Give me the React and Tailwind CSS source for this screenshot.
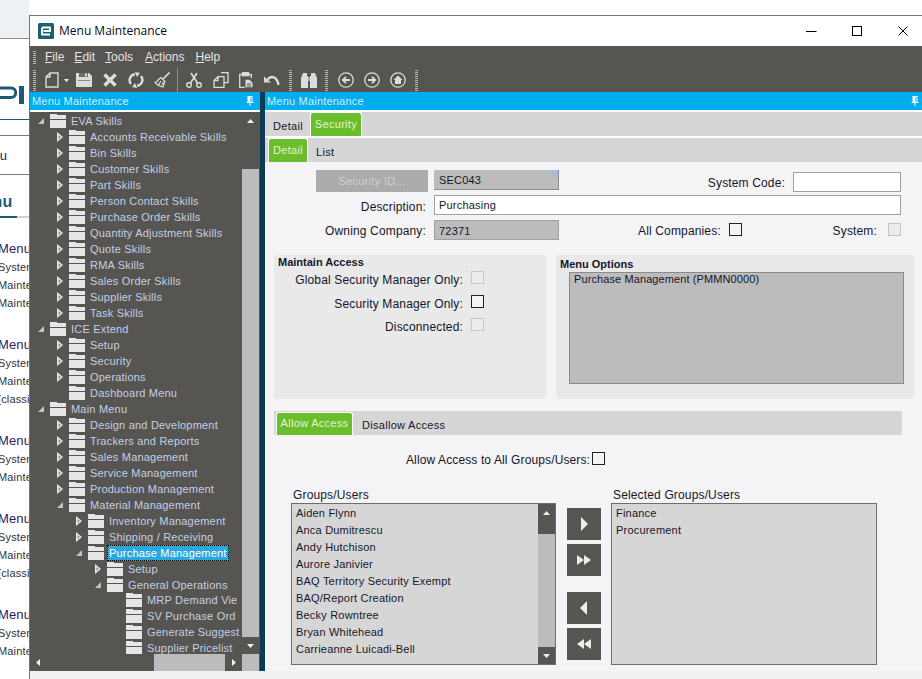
import React from 'react';

const tree = [
  { t: 'EVA Skills', l: 0, a: 'open' },
  { t: 'Accounts Receivable Skills', l: 1, a: 'closed' },
  { t: 'Bin Skills', l: 1, a: 'closed' },
  { t: 'Customer Skills', l: 1, a: 'closed' },
  { t: 'Part Skills', l: 1, a: 'closed' },
  { t: 'Person Contact Skills', l: 1, a: 'closed' },
  { t: 'Purchase Order Skills', l: 1, a: 'closed' },
  { t: 'Quantity Adjustment Skills', l: 1, a: 'closed' },
  { t: 'Quote Skills', l: 1, a: 'closed' },
  { t: 'RMA Skills', l: 1, a: 'closed' },
  { t: 'Sales Order Skills', l: 1, a: 'closed' },
  { t: 'Supplier Skills', l: 1, a: 'closed' },
  { t: 'Task Skills', l: 1, a: 'closed' },
  { t: 'ICE Extend', l: 0, a: 'open' },
  { t: 'Setup', l: 1, a: 'closed' },
  { t: 'Security', l: 1, a: 'closed' },
  { t: 'Operations', l: 1, a: 'closed' },
  { t: 'Dashboard Menu', l: 1 },
  { t: 'Main Menu', l: 0, a: 'open' },
  { t: 'Design and Development', l: 1, a: 'closed' },
  { t: 'Trackers and Reports', l: 1, a: 'closed' },
  { t: 'Sales Management', l: 1, a: 'closed' },
  { t: 'Service Management', l: 1, a: 'closed' },
  { t: 'Production Management', l: 1, a: 'closed' },
  { t: 'Material Management', l: 1, a: 'open' },
  { t: 'Inventory Management', l: 2, a: 'closed' },
  { t: 'Shipping / Receiving', l: 2, a: 'closed' },
  { t: 'Purchase Management', l: 2, a: 'open', selected: true },
  { t: 'Setup', l: 3, a: 'closed' },
  { t: 'General Operations', l: 3, a: 'open' },
  { t: 'MRP Demand Vie', l: 4, lift: true },
  { t: 'SV Purchase Ord', l: 4 },
  { t: 'Generate Suggest', l: 4 },
  { t: 'Supplier Pricelist', l: 4 },
];

const users = ['Aiden Flynn', 'Anca Dumitrescu', 'Andy Hutchison', 'Aurore Janivier', 'BAQ Territory Security Exempt', 'BAQ/Report Creation', 'Becky Rowntree', 'Bryan Whitehead', 'Carrieanne Luicadi-Bell'];

const backPage = [
  ['Menu', 'System', 'Mainte', 'Mainte'],
  ['Menu', 'System', 'Mainte', '[classic'],
  ['Menu', 'System', 'Mainte'],
  ['Menu', 'System', 'Mainte', '[classic'],
  ['Menu', 'System', 'Mainte'],
];

const Folder = () => (
  <svg width="16" height="14" viewBox="0 0 16 14" className="shrink-0">
    <path d="M0 0h7v1h9v4H0z" fill="#e6e6e6" />
    <rect x="0" y="6" width="16" height="8" fill="#e6e6e6" />
  </svg>
);

const Arrow = ({ kind }) => {
  if (kind === 'closed') {
    return (
      <svg width="6" height="10" viewBox="0 0 6 10">
        <path d="M0 0l6 5-6 5z" fill="#e8e8e8" />
        <path d="M1.5 3l2.5 2-2.5 2z" fill="#8e8e8e" />
      </svg>
    );
  }
  if (kind === 'open') {
    return (
      <svg width="6" height="6" viewBox="0 0 6 6">
        <path d="M6 0v6H0z" fill="#c4c4c4" />
      </svg>
    );
  }
  return null;
};

const TreeRow = ({ item }) => (
  <div className={`flex h-4 items-center whitespace-nowrap ${item.lift ? '-mt-px' : ''}`} style={{ paddingLeft: 8 + item.l * 19 }}>
    <div className="flex w-[6px] shrink-0 items-center justify-center"><Arrow kind={item.a} /></div>
    <div className="ml-[6px]"><Folder /></div>
    {item.selected ? (
      <span className="ml-[3px] flex h-4 items-center border border-dotted border-black bg-[#29a8e0] px-px text-white">{item.t}</span>
    ) : (
      <span className="ml-[5px]">{item.t}</span>
    )}
  </div>
);

const Tri = ({ dir, size = 7 }) => {
  const d = { up: 'M0 4L3.5 0 7 4z', down: 'M0 0h7L3.5 4z' };
  return <svg width={size} height="4" viewBox="0 0 7 4"><path d={d[dir]} fill="#f0f0f0" /></svg>;
};

const Pin = () => (
  <svg width="8" height="10" viewBox="0 0 8 10">
    <path d="M1.5 0h5v6h1v1h-3v3h-1V7h-3V6h1z" fill="#fff" />
    <rect x="4.5" y="1" width="1" height="5" fill="#00adef" />
  </svg>
);

const Grip = () => (
  <div className="h-[21px] w-[3px] bg-[repeating-linear-gradient(to_bottom,#b9b9b9_0,#b9b9b9_1px,transparent_1px,transparent_2px)]" />
);

const c = '#dcdcdc';
const IconNew = () => (
  <svg width="14" height="16" viewBox="0 0 14 16" fill="none" stroke={c} strokeWidth="1.4"><path d="M5 1h8v14H1V5zM5 1v4H1" /></svg>
);
const IconSave = () => (
  <svg width="16" height="16" viewBox="0 0 16 16"><path d="M0 1h13l3 3v11H0z" fill={c} /><rect x="3" y="1" width="9" height="4" fill="#6e6c69" /><rect x="9" y="1.5" width="2" height="3" fill={c} /><rect x="2" y="8" width="12" height="1" fill="#8a8886" /></svg>
);
const IconX = () => (
  <svg width="14" height="14" viewBox="0 0 14 14" stroke={c} strokeWidth="3.4"><path d="M1.5 1.5l11 11M12.5 1.5l-11 11" /></svg>
);
const IconRefresh = () => (
  <svg width="16" height="16" viewBox="0 0 16 16" fill="none"><path d="M3 12A6 6 0 0 1 7 2.2" stroke={c} strokeWidth="2.4" /><path d="M13 4a6 6 0 0 1-4 9.8" stroke={c} strokeWidth="2.4" /><path d="M7 0l5 1-3 4zM9 16l-5-1 3-4z" fill={c} /></svg>
);
const IconBroom = () => (
  <svg width="16" height="16" viewBox="0 0 16 16" fill="none" stroke={c} strokeWidth="1.2"><path d="M15.5.5L9 7" strokeWidth="1.6" /><path d="M7 5.5l4 4-2 5.5-3-1-1-1.5-1 1-3-3 2-1 .5-1z" /><path d="M7 9l-2 3M9.5 10L8 13" /></svg>
);
const IconCut = () => (
  <svg width="16" height="16" viewBox="0 0 16 16" fill="none" stroke={c} strokeWidth="1.4"><circle cx="3" cy="13" r="2.3" /><circle cx="13" cy="13" r="2.3" /><path d="M4.5 11L11 1M11.5 11L5 1" strokeWidth="1.6" /></svg>
);
const IconCopy = () => (
  <svg width="16" height="16" viewBox="0 0 16 16" fill="none" stroke={c} strokeWidth="1.3"><path d="M8 .7h7v10h-4" /><path d="M5 4.7h6v10.6H1V8.5zM5 4.7v4H1" /></svg>
);
const IconPaste = () => (
  <svg width="14" height="16" viewBox="0 0 14 16" fill="none" stroke={c} strokeWidth="1.3"><path d="M3.5 2.5H.7v13h5M9.5 2.5h2.8V6" /><rect x="3.5" y="0.7" width="6" height="3" fill={c} /><path d="M6.5 7.7h4l3 3v4.6h-7z" fill={c} stroke="none" /><path d="M8 12h4M8 14h4" stroke="#575552" strokeWidth="1" /></svg>
);
const IconUndo = () => (
  <svg width="16" height="12" viewBox="0 0 16 12" fill="none"><path d="M3.5 5.5C7 1.500 13 2 14.500 11" stroke={c} strokeWidth="2.4" /><path d="M0 2.500l7 6H0z" fill={c} /></svg>
);
const IconBino = () => (
  <svg width="16" height="15" viewBox="0 0 16 15"><path d="M2 0h4v3h1v12H0V5z" fill={c} /><path d="M10 0h4l2 5v10H9V3h1z" fill={c} /><rect x="7" y="4" width="2" height="4" fill="#a9a9a9" /></svg>
);
const Circle = ({ children }) => (
  <svg width="16" height="16" viewBox="0 0 16 16" fill="none"><circle cx="8" cy="8" r="7.2" stroke={c} strokeWidth="1.3" />{children}</svg>
);

const Check = ({ on }) => (
  <div className={`h-[13px] w-[13px] shrink-0 border ${on ? 'border-[#222] bg-[#f4f4f6]' : 'border-[#c6c6c6] bg-[#ececec]'}`} />
);

const MoveBtn = ({ d, className = '' }) => (
  <div className={`flex h-8 w-[34px] items-center justify-center bg-[#575552] ${className}`}>
    <svg width="14" height="14" viewBox="0 0 14 14"><path d={d} fill="#ececec" /></svg>
  </div>
);

const GreenTab = ({ children, className = '' }) => (
  <div className={`flex items-start justify-center rounded-t-[3px] border border-b-0 border-white bg-[#6abd2b] text-[#e6f3d6] ${className}`}>{children}</div>
);

export default function App() {
  return (
    <div className="flex h-[679px] w-[922px] overflow-hidden bg-white font-['Liberation_Sans',Arial,sans-serif] text-[12px] tracking-[0.15px] text-[#16162a]">
      {/* page behind the window */}
      <div className="flex w-[29px] shrink-0 flex-col overflow-hidden whitespace-nowrap">
        <div className="h-[38px] shrink-0 bg-[#eef1f4]" />
        <div className="h-[81px] shrink-0 border-t border-[#8b9298] pt-[47px]">
          <svg width="29" height="19" viewBox="0 0 29 19" className="block">
            <path d="M0 2h11a4.500 4.500 0 0 1 0 9.500H0" fill="none" stroke="#1c5a76" strokeWidth="3" />
            <rect x="19" y="0" width="5" height="18" fill="#1c5a76" />
          </svg>
        </div>
        <div className="h-[16px] shrink-0 border-t border-[#1c5a76]" />
        <div className="flex h-[39px] shrink-0 items-center border-t border-[#777] text-[13px] text-[#1a2a5a]"><span className="-ml-[26px] pt-[2px]">Menu</span></div>
        <div className="flex h-[42px] shrink-0 border-t border-[#777] pt-[17px] text-[16px] font-bold leading-[20px] text-[#1c5a76]"><span className="-ml-[30px]">Menu</span></div>
        <div className="flex h-[2px] shrink-0"><div className="w-[17px] bg-[#1c5a76]" /><div className="flex-1 bg-[#d0d0d0]" /></div>
        <div className="mt-[22px] shrink-0">
          {backPage.map((group, i) => (
            <div key={i} className="mb-6">
              {group.map((line, j) => (
                <div key={j} className={`-ml-[2px] flex h-[18px] items-center ${j === 0 ? 'text-[13px] text-[#2a1a6a]' : 'text-[11px] text-[#333]'}`}>{line}</div>
              ))}
            </div>
          ))}
        </div>
      </div>

      {/* window */}
      <div className="mt-[15px] flex flex-1 flex-col border-l border-t border-[#6f7478] bg-[#f1f1f3]">
        <div className="flex h-[30px] shrink-0 items-center bg-white">
          <svg width="16" height="16" viewBox="0 0 16 16" className="ml-2">
            <rect width="16" height="16" rx="1.5" fill="#1c6070" />
            <path d="M4 4.500h8v3.500H5.500M4 4.500v7h8" fill="none" stroke="#fff" strokeWidth="1.800" />
          </svg>
          <span className="ml-[5px] font-['Open_Sans',sans-serif] text-[12px] tracking-normal text-[#0a0a14]">Menu Maintenance</span>
          <svg width="11" height="11" viewBox="0 0 11 11" className="ml-auto mr-[35px]"><path d="M0 5.500h10.500" stroke="#000" /></svg>
          <svg width="10" height="10" viewBox="0 0 10 10" className="mr-9"><rect x=".5" y=".5" width="9" height="9" fill="none" stroke="#000" /></svg>
          <svg width="10" height="10" viewBox="0 0 10 10" className="mr-[14px]"><path d="M.5.500l9 9M9.500.500l-9 9" stroke="#000" /></svg>
        </div>

        <div className="flex h-[22px] shrink-0 items-center bg-[#575552] tracking-normal text-[#e6e6e6]">
          <div className="ml-[3px] h-[13px] w-[3px] bg-[repeating-linear-gradient(to_bottom,#b9b9b9_0,#b9b9b9_1px,transparent_1px,transparent_2px)]" />
          <span className="ml-[9px]"><u>F</u>ile</span>
          <span className="ml-[10px]"><u>E</u>dit</span>
          <span className="ml-[10px]"><u>T</u>ools</span>
          <span className="ml-3"><u>A</u>ctions</span>
          <span className="ml-[11px]"><u>H</u>elp</span>
        </div>

        <div className="flex h-6 shrink-0 items-center bg-[#575552]">
          <div className="ml-[3px]"><Grip /></div>
          <div className="ml-[9px]"><IconNew /></div>
          <div className="ml-[5px]"><svg width="5" height="3" viewBox="0 0 5 3" className="block"><path d="M0 0h5L2.500 3z" fill="#f0f0f0" /></svg></div>
          <div className="ml-[7px]"><IconSave /></div>
          <div className="ml-[11px]"><IconX /></div>
          <div className="ml-[11px]"><IconRefresh /></div>
          <div className="ml-[10px]"><IconBroom /></div>
          <div className="ml-[7px] h-6 w-px bg-[#8f8e8c]" />
          <div className="ml-2"><IconCut /></div>
          <div className="ml-[11px]"><IconCopy /></div>
          <div className="ml-[10px]"><IconPaste /></div>
          <div className="ml-[11px]"><IconUndo /></div>
          <div className="ml-[9px]"><Grip /></div>
          <div className="ml-[9px]"><IconBino /></div>
          <div className="ml-2"><Grip /></div>
          <div className="ml-[10px]"><Circle><path d="M12 8H5M8 4.800L4.800 8 8 11.200" stroke={c} strokeWidth="1.800" /></Circle></div>
          <div className="ml-[10px]"><Circle><path d="M4 8h7M8 4.800L11.200 8 8 11.200" stroke={c} strokeWidth="1.800" /></Circle></div>
          <div className="ml-[10px]"><Circle><path d="M8 3.500L12.500 8H11v4H5V8H3.500z" fill={c} /></Circle></div>
          <div className="ml-[9px]"><Grip /></div>
        </div>

        <div className="flex h-[579px] shrink-0">
          {/* menu tree */}
          <div className="flex w-[230px] shrink-0 flex-col">
            <div className="flex h-[18px] items-center justify-between bg-[#00adef] pl-[2px] pr-[6px] text-[11px] tracking-[0.2px] text-[#d4ecfa]">
              <span>Menu Maintenance</span>
              <Pin />
            </div>
            <div className="h-[2px] bg-white" />
            <div className="flex h-[542px] bg-[#575552] pr-px">
              <div className="min-w-0 flex-1 overflow-hidden pt-px text-[11px] tracking-[0.2px] text-[#c4cfe3]">
                {tree.map((item, i) => <TreeRow key={i} item={item} />)}
              </div>
              <div className="flex w-[17px] shrink-0 flex-col bg-[#bcbcbc]">
                <div className="flex h-[57px] justify-center bg-[#575552] pt-[7px]"><Tri dir="up" /></div>
                <div className="flex-1" />
                <div className="flex h-[17px] items-center justify-center bg-[#575552]"><Tri dir="down" /></div>
              </div>
            </div>
            <div className="flex h-[17px] bg-[#575552] pr-px">
              <div className="flex w-[124px] items-center pl-[6px]"><svg width="4" height="7" viewBox="0 0 4 7"><path d="M4 0v7L0 3.500z" fill="#f0f0f0" /></svg></div>
              <div className="w-[71px] bg-[#bcbcbc]" />
              <div className="flex w-[17px] items-center justify-center"><svg width="4" height="7" viewBox="0 0 4 7"><path d="M0 0v7l4-3.500z" fill="#f0f0f0" /></svg></div>
              <div className="flex-1 bg-[#bcbcbc]" />
            </div>
          </div>

          <div className="w-[5px] shrink-0 bg-[#0e3a56]" />

          {/* form */}
          <div className="flex min-w-0 flex-1 flex-col bg-[#f4f4f7]">
            <div className="flex h-[18px] items-center justify-between bg-[#00adef] pl-[2px] pr-[3px] text-[11px] tracking-[0.2px] text-[#d4ecfa]">
              <span>Menu Maintenance</span>
              <Pin />
            </div>
            <div className="h-[2px] bg-white" />
            <div className="flex h-6 bg-[#d6d6d6] text-[11px] tracking-[0.3px]">
              <span className="ml-2 mt-[8px] leading-[13px]">Detail</span>
              <GreenTab className="ml-[7px] w-[52px] pt-[3px]">Security</GreenTab>
            </div>
            <div className="h-[2px] bg-white" />
            <div className="flex h-6 bg-[#d6d6d6] text-[11px] tracking-[0.3px]">
              <GreenTab className="ml-[3px] w-10 pt-[3px]">Detail</GreenTab>
              <span className="ml-2 mt-[8px] leading-[13px]">List</span>
            </div>

            <div className="mt-2 flex h-[22px] items-start pl-[51px] pr-[21px]">
              <div className="flex h-[22px] w-28 items-center justify-center bg-[#ababab] text-[11px] tracking-[0.3px] text-[#cfcfcf]">Security ID...</div>
              <div className="relative ml-[6px] flex h-5 w-[125px] items-center border-b border-r border-[#8f8f8f] bg-[#bcbcbc] pl-[5px] pt-px text-[11px] tracking-[0.2px]">
                SEC043
                <div className="absolute right-0 top-0 h-0 w-0 border-l-[10px] border-t-[10px] border-l-transparent border-t-[#a9bbd8]" />
              </div>
              <span className="ml-auto mr-2 mt-1">System Code:</span>
              <div className="mt-[2px] h-5 w-[108px] border border-[#a0a0a0] bg-white" />
            </div>
            <div className="mt-[3px] flex h-5 items-center pl-[51px] pr-[21px]">
              <span className="w-[110px] pt-[3px] text-right">Description:</span>
              <div className="ml-2 flex h-5 flex-1 items-center border border-[#a0a0a0] bg-white pl-1 text-[11px] tracking-[0.2px]">Purchasing</div>
            </div>
            <div className="mt-[5px] flex h-5 items-center pl-[51px] pr-[21px]">
              <span className="w-[110px] pt-[2px] text-right">Owning Company:</span>
              <div className="ml-2 flex h-5 w-[125px] items-center border border-[#a0a0a0] bg-[#bcbcbc] pl-1 pt-[2px] text-[11px] tracking-[0.2px]">72371</div>
              <span className="ml-[79px] pt-[2px]">All Companies:</span>
              <div className="ml-2 -mt-px"><Check on /></div>
              <span className="ml-auto mr-[11px] pt-[2px]">System:</span>
              <div className="-mt-px"><Check /></div>
            </div>

            <div className="mt-[15px] flex h-36 gap-[10px] pl-[9px] pr-2">
              <div className="w-[272px] rounded-[3px] bg-[#e9e9e9] pl-1 pt-[1px]">
                <div className="text-[11px] font-bold leading-[13px] tracking-normal">Maintain Access</div>
                <div className="mt-[2px] flex h-[13px] items-center justify-end pr-[62px]">
                  <span className="mr-2 pt-1">Global Security Manager Only:</span><Check />
                </div>
                <div className="mt-[11px] flex h-[13px] items-center justify-end pr-[62px]">
                  <span className="mr-2 pt-1">Security Manager Only:</span><Check on />
                </div>
                <div className="mt-[10px] flex h-[13px] items-center justify-end pr-[62px]">
                  <span className="mr-2 pt-1">Disconnected:</span><Check />
                </div>
              </div>
              <div className="flex-1 rounded-[3px] bg-[#e9e9e9] pl-1 pt-[3px]">
                <div className="text-[11px] font-bold leading-[13px] tracking-normal">Menu Options</div>
                <div className="ml-[9px] mr-[10px] mt-px h-[112px] border border-[#8a8a8a] bg-[#bcbcbc] pl-1 text-[11px] leading-[13px] tracking-[0.1px]">Purchase Management (PMMN0000)</div>
              </div>
            </div>

            <div className="ml-[9px] mt-3 flex h-6 w-[628px] bg-[#d6d6d6] text-[11px] tracking-[0.3px]">
              <GreenTab className="ml-[2px] mt-px w-[77px] pt-[2px]">Allow Access</GreenTab>
              <span className="ml-[9px] mt-[8px] leading-[13px]">Disallow Access</span>
            </div>

            <div className="ml-[141px] mt-[17px] flex h-[13px] items-center">
              <span className="mr-[2px] pt-[2px] tracking-[0.12px]">Allow Access to All Groups/Users:</span><Check on />
            </div>

            <div className="ml-[26px] mt-[23px] flex">
              <div className="w-[265px]">
                <div className="ml-[2px] h-[15px] leading-[15px]">Groups/Users</div>
                <div className="flex h-[162px] border border-[#6e6e6e] bg-[#d6d6d6]">
                  <div className="flex-1 pl-1 pt-px text-[11px] tracking-[0.2px]">
                    {users.map(u => <div key={u} className="flex h-[17px] items-center">{u}</div>)}
                  </div>
                  <div className="flex w-[17px] flex-col bg-[#bcbcbc]">
                    <div className="flex h-[30px] justify-center bg-[#575552] pt-[7px]"><Tri dir="up" /></div>
                    <div className="flex-1" />
                    <div className="flex h-[17px] items-center justify-center bg-[#575552]"><Tri dir="down" /></div>
                  </div>
                </div>
              </div>
              <div className="ml-[11px] w-[34px] pt-5">
                <MoveBtn d="M4 0l7 7-7 7z" />
                <MoveBtn d="M0 2l7 5-7 5zM7 2l7 5-7 5z" className="mt-1" />
                <MoveBtn d="M10 0v14L3 7z" className="mt-4" />
                <MoveBtn d="M14 2v10L7 7zM7 2v10L0 7z" className="mt-1" />
              </div>
              <div className="ml-[10px] w-[266px]">
                <div className="ml-[2px] h-[15px] leading-[15px]">Selected Groups/Users</div>
                <div className="h-[162px] border border-[#6e6e6e] bg-[#d6d6d6] pl-1 pt-px text-[11px] tracking-[0.2px]">
                  <div className="flex h-[17px] items-center">Finance</div>
                  <div className="flex h-[17px] items-center">Procurement</div>
                </div>
              </div>
            </div>
          </div>
        </div>
        <div className="flex-1 bg-[#f1f1f3]" />
      </div>
    </div>
  );
}
